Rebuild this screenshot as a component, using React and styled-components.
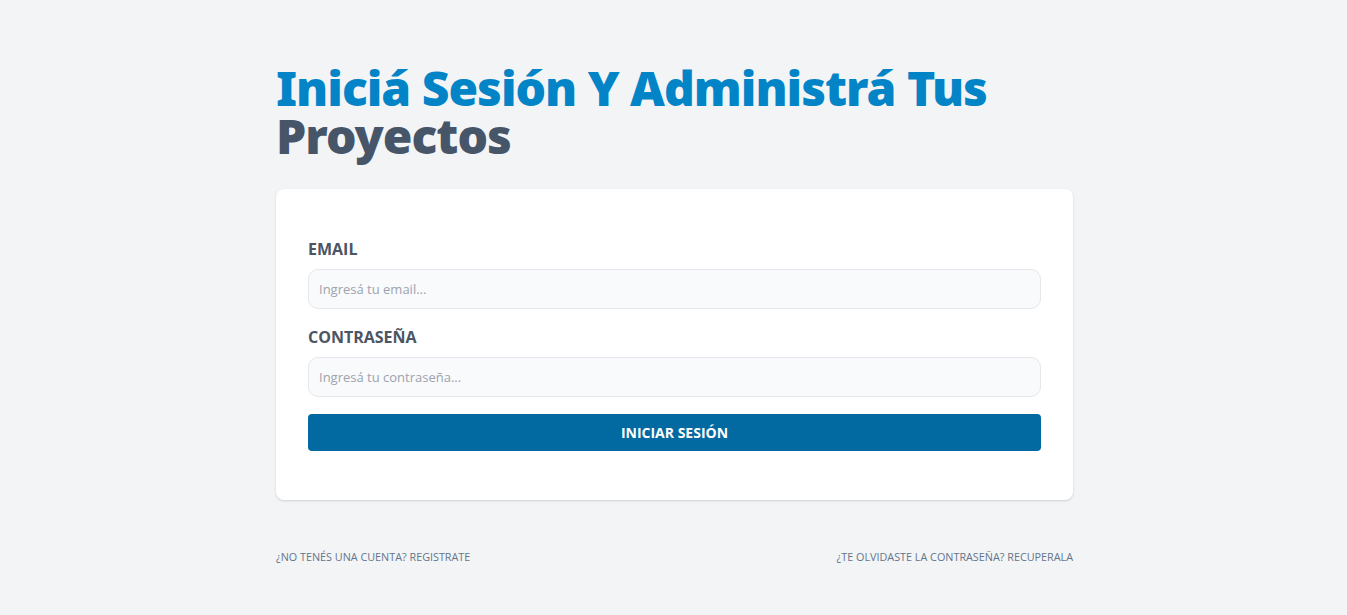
import React from "react";
import styled, { createGlobalStyle } from "styled-components";

const GlobalStyle = createGlobalStyle`
  * { box-sizing: border-box; }
  body {
    margin: 0;
    background: #f3f4f6;
    font-family: "Open Sans", "Noto Sans", "Liberation Sans", sans-serif;
  }
`;

const Main = styled.main`
  width: 797px;
  margin-left: calc(50% - 397.5px);
  padding-top: 64px;
`;

const Title = styled.h1`
  margin: 0;
  font-family: "Noto Sans", "Open Sans", sans-serif;
  font-size: 48px;
  line-height: 48px;
  font-weight: 900;
  letter-spacing: -1px;
  color: #0284c7;
  text-transform: capitalize;

  span {
    color: #475569;
  }
`;

const Card = styled.form`
  margin-top: 29px;
  background: #fff;
  border-radius: 8px;
  box-shadow: 0 1px 3px rgba(0, 0, 0, 0.1), 0 1px 2px rgba(0, 0, 0, 0.06);
  padding: 48px 32px 49px;
`;

const Field = styled.div`
  display: flex;
  flex-direction: column;
  gap: 8px;
  margin-bottom: ${(p) => p.$mb || 16}px;
`;

const Label = styled.label`
  font-size: 16px;
  line-height: 24px;
  font-weight: 700;
  color: #4b5563;
  text-transform: uppercase;
`;

const Input = styled.input`
  width: 100%;
  height: 40px;
  padding: 0 10px;
  border: 1px solid #e5e7eb;
  border-radius: 10px;
  background: #f9fafb;
  font-family: inherit;
  font-size: 13px;
  color: #374151;
  outline: none;

  &::placeholder {
    color: #9ca3af;
  }
`;

const Submit = styled.button`
  width: 100%;
  height: 37px;
  border: none;
  border-radius: 4px;
  background: #0369a1;
  color: #fff;
  font-family: inherit;
  font-size: 14px;
  font-weight: 700;
  text-transform: uppercase;
  cursor: pointer;
`;

const Links = styled.nav`
  display: flex;
  justify-content: space-between;
  margin-top: 49px;
`;

const FootLink = styled.a`
  font-size: 10.8px;
  line-height: 16px;
  color: #64748b;
  text-transform: uppercase;
  text-decoration: none;
`;

export default function App() {
  return (
    <>
      <GlobalStyle />
      <Main>
        <Title>
          Iniciá sesión y administrá tus <span>proyectos</span>
        </Title>
        <Card onSubmit={(e) => e.preventDefault()}>
          <Field>
            <Label htmlFor="email">Email</Label>
            <Input id="email" type="email" placeholder="Ingresá tu email..." />
          </Field>
          <Field $mb={17}>
            <Label htmlFor="password">Contraseña</Label>
            <Input id="password" type="password" placeholder="Ingresá tu contraseña..." />
          </Field>
          <Submit type="submit">Iniciar sesión</Submit>
        </Card>
        <Links>
          <FootLink href="#">¿No tenés una cuenta? Registrate</FootLink>
          <FootLink href="#">¿Te olvidaste la contraseña? Recuperala</FootLink>
        </Links>
      </Main>
    </>
  );
}
